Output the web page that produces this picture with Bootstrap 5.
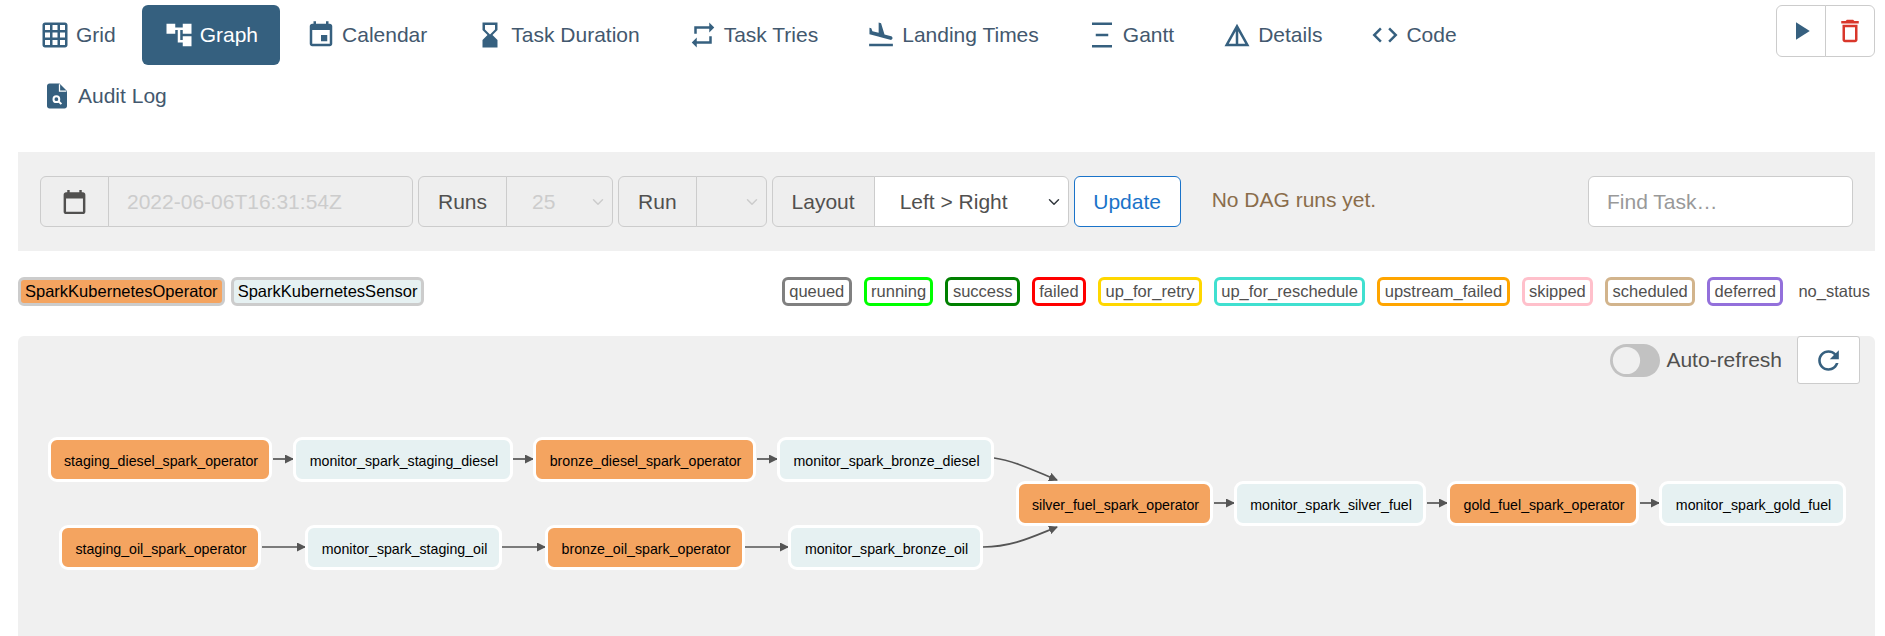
<!DOCTYPE html>
<html lang="en">
<head>
    <meta charset="UTF-8">
    <meta name="viewport" content="width=device-width, initial-scale=1.0">
    <title>Graph</title>
    <link rel="stylesheet" href="https://cdn.jsdelivr.net/npm/bootstrap@5.3.0/dist/css/bootstrap.min.css">
    <style>
        html, body { overflow: hidden; }
        body { font-family: "Liberation Sans", Arial, sans-serif; color: #51504f; padding: 0 10px 0 18px; height: 636px; }
        .top-nav { width: 1560px; column-gap: 4px; row-gap: 1px; padding-top: 5px; }
        .top-nav .nav-link { display: flex; align-items: center; gap: 6px; height: 60px; padding: 0 22px; font-size: 21px; color: #43586e; border-radius: 6px; }
        .top-nav .nav-link svg { width: 30px; height: 30px; fill: #36607f; flex: none; }
        .top-nav .nav-link.active { background-color: #35607f; color: #fff; }
        .top-nav .nav-link.active svg { fill: #fff; }
        .top-nav .audit-link { padding-left: 24px; }
        .dag-actions { margin-top: 5px; height: 52px; }
        .dag-actions .btn { width: 50px; height: 52px; padding: 0; background: #fff; border: 1px solid #ccc; display: flex; align-items: center; justify-content: center; }
        .dag-actions svg { width: 30px; height: 30px; }
        .filter-panel { background: #f0f0f0; margin-top: 26px; height: 99px; padding: 24px 22px; gap: 5px; }
        .filter-panel .input-group { width: auto; flex: none; flex-wrap: nowrap; height: 51px; }
        .filter-panel .input-group-text, .filter-panel .form-control, .filter-panel .form-select { font-size: 21px; color: #51504f; border-color: #ccc; height: 51px; flex: none; }
        .filter-panel .input-group-text { background: #eee; padding: 0 19px; }
        .filter-panel .form-select { padding-left: 25px; background-position: right 6px center; }
        .filter-panel .form-control:disabled, .filter-panel .form-select:disabled { background-color: #eee; color: #ccc; }
        .date-addon { width: 69px; justify-content: center; }
        .date-addon svg { width: 38px; height: 38px; fill: #51504f; }
        .filter-panel .date-field { width: 305px; padding-left: 18px; }
        .filter-panel .runs-select { width: 107px; }
        .filter-panel .run-select { width: 71px; }
        .filter-panel .layout-select { width: 195px; }
        .filter-panel .form-select:disabled { background-image: url("data:image/svg+xml,%3csvg xmlns='http://www.w3.org/2000/svg' viewBox='0 0 16 16'%3e%3cpath fill='none' stroke='%23ccc' stroke-linecap='round' stroke-linejoin='round' stroke-width='2' d='m2 5 6 6 6-6'/%3e%3c/svg%3e"); }
        .update-btn { width: 107px; height: 51px; font-size: 21px; color: #1a73c9; background: #fff; border-color: #1a73c9; padding: 0; flex: none; }
        .dag-note { font-size: 21px; color: #8a6d4b; margin: 0 0 3px 26px; }
        .filter-panel .find-task { width: 265px; background: #fff; padding-left: 18px; }
        .filter-panel .find-task::placeholder { color: #999; }
        .legend-row { margin-top: 26px; height: 29px; }
        .legend-tag { height: 29px; border: 3px solid #ccc; border-radius: 6px; padding: 0 4px; font-size: 16.5px; line-height: 23px; color: #51504f; background: #fff; white-space: nowrap; }
        .op-tag { color: #000; background: #f4a460; border-color: #ccc; }
        .sensor-tag { color: #000; background: #e6f1f2; border-color: #ccc; }
        .type-list { gap: 6px; }
        .status-list { gap: 12px; }
        .status-list .legend-tag { padding: 0 4.4px; }
        .s-queued { border-color: gray; }
        .s-running { border-color: lime; }
        .s-success { border-color: green; }
        .s-failed { border-color: red; }
        .s-retry { border-color: gold; }
        .s-resched { border-color: turquoise; }
        .s-upstream { border-color: orange; }
        .s-skipped { border-color: pink; }
        .s-scheduled { border-color: tan; }
        .s-deferred { border-color: mediumpurple; }
        .status-list .s-none { border-color: #fff; padding: 0 2px 0 4px; margin-left: -4px; }
        .graph-panel { background: #f0f0f0; border-radius: 6px 6px 0 0; margin-top: 30px; height: 300px; }
        .refresh-bar { position: relative; z-index: 1; height: 48px; padding-right: 15px; }
        .refresh-bar .form-check-input { width: 50px; height: 33px; margin: 0 6px 0 0; float: none; border: none; border-radius: 2em; background-color: #c2c2c2; background-position: left center; background-size: contain; background-repeat: no-repeat; background-image: url("data:image/svg+xml,%3csvg xmlns='http://www.w3.org/2000/svg' viewBox='-4 -4 8 8'%3e%3ccircle r='3.3' fill='%23f0f0f0'/%3e%3c/svg%3e"); }
        .refresh-label { font-size: 21px; margin-right: 15px; }
        .refresh-btn { width: 63px; height: 48px; padding: 0; background: #fff; border: 1px solid #ccc; display: flex; align-items: center; justify-content: center; border-radius: 3px; }
        .refresh-btn svg { width: 31px; height: 31px; fill: #36607f; }
        .dag-edges { position: absolute; left: 0; top: 0; width: 1857px; height: 300px; }
        .task-node { position: absolute; height: 45px; border: 3px solid #fff; border-radius: 9px; padding-left: 2px; font-size: 14.2px; line-height: 42px; text-align: center; color: #000; white-space: nowrap; }
        .node-op { background: #f4a460; }
        .node-sensor { background: #e6f1f2; }
    </style>
</head>
<body>
    <div class="d-flex justify-content-between align-items-start">
        <ul class="nav nav-pills top-nav">
            <li class="nav-item"><a class="nav-link" href="#"><svg viewBox="0 0 24 24"><path d="M20 2H4c-1.1 0-2 .9-2 2v16c0 1.1.9 2 2 2h16c1.1 0 2-.9 2-2V4c0-1.1-.9-2-2-2zM8 20H4v-4h4v4zm0-6H4v-4h4v4zm0-6H4V4h4v4zm6 12h-4v-4h4v4zm0-6h-4v-4h4v4zm0-6h-4V4h4v4zm6 12h-4v-4h4v4zm0-6h-4v-4h4v4zm0-6h-4V4h4v4z"/></svg>Grid</a></li>
            <li class="nav-item"><a class="nav-link active" href="#"><svg viewBox="0 0 24 24"><path d="M22 11V3h-7v3H9V3H2v8h7V8h2v10h4v3h7v-8h-7v3h-2V8h2v3z"/></svg>Graph</a></li>
            <li class="nav-item"><a class="nav-link" href="#"><svg viewBox="0 0 24 24"><path d="M17 12h-5v5h5v-5zM16 1v2H8V1H6v2H5c-1.11 0-1.99.9-1.99 2L3 19c0 1.1.89 2 2 2h14c1.1 0 2-.9 2-2V5c0-1.1-.9-2-2-2h-1V1h-2zm3 18H5V8h14v11z"/></svg>Calendar</a></li>
            <li class="nav-item"><a class="nav-link" href="#"><svg viewBox="0 0 24 24"><path d="M18 22l-.01-6L14 12l3.99-4.01L18 2H6v6l4 4-4 3.99V22h12zM8 7.5V4h8v3.5l-4 4-4-4z"/></svg>Task Duration</a></li>
            <li class="nav-item"><a class="nav-link" href="#"><svg viewBox="0 0 24 24"><path d="M7 7h10v3l4-4-4-4v3H5v6h2V7zm10 10H7v-3l-4 4 4 4v-3h12v-6h-2v4z"/></svg>Task Tries</a></li>
            <li class="nav-item"><a class="nav-link" href="#"><svg viewBox="0 0 24 24"><path d="M2.5 19h19v2h-19zm7.18-5.73l4.35 1.16 5.31 1.42c.8.21 1.62-.26 1.84-1.06.21-.8-.26-1.62-1.06-1.84l-5.31-1.42-2.76-9.02L10.12 2v8.28L5.15 8.95l-.93-2.32-1.45-.39v5.17l1.6.43 5.31 1.43z"/></svg>Landing Times</a></li>
            <li class="nav-item"><a class="nav-link" href="#"><svg viewBox="0 0 24 24"><path d="M4 22v-2h16v2H4zM4 4V2h16v2H4zm3 9v-2h10v2H7z"/></svg>Gantt</a></li>
            <li class="nav-item"><a class="nav-link" href="#"><svg viewBox="0 0 24 24"><path d="M12 3L2 21h20L12 3zm1 5.92L18.6 19H13V8.92zm-2 0V19H5.4L11 8.92z"/></svg>Details</a></li>
            <li class="nav-item"><a class="nav-link" href="#"><svg viewBox="0 0 24 24"><path d="M9.4 16.6L4.8 12l4.6-4.6L8 6l-6 6 6 6 1.4-1.4zm5.2 0l4.6-4.6-4.6-4.6L16 6l6 6-6 6-1.4-1.4z"/></svg>Code</a></li>
            <li class="nav-item"><a class="nav-link audit-link" href="#"><svg viewBox="0 0 24 24"><path d="M14 2H6c-1.1 0-2 .9-2 2v16c0 1.1.9 2 2 2h12c1.1 0 2-.9 2-2V8z"/><path d="M14 2.5V8h5.5" fill="none" stroke="#fff" stroke-width="1"/><circle cx="11.5" cy="14.5" r="2.3" fill="none" stroke="#fff" stroke-width="1.6"/><path d="M13.2 16.2l2.3 2.3" stroke="#fff" stroke-width="1.6"/></svg>Audit Log</a></li>
        </ul>
        <div class="btn-group dag-actions">
            <button class="btn" type="button"><svg viewBox="0 0 24 24" fill="#36607f"><path d="M8 5v14l11-7z"/></svg></button>
            <button class="btn" type="button"><svg viewBox="0 0 24 24" fill="#d9372b"><path d="M6 19c0 1.1.9 2 2 2h8c1.1 0 2-.9 2-2V7H6v12zM8 9h8v10H8V9zm7.5-5l-1-1h-5l-1 1H5v2h14V4z"/></svg></button>
        </div>
    </div>

    <form class="filter-panel d-flex align-items-center">
        <div class="input-group">
            <span class="input-group-text date-addon"><svg viewBox="0 0 24 24"><path d="M19 4h-1V2h-2v2H8V2H6v2H5c-1.1 0-2 .9-2 2v14c0 1.1.9 2 2 2h14c1.1 0 2-.9 2-2V6c0-1.1-.9-2-2-2zm0 16H5V9h14v11z"/></svg></span>
            <input class="form-control date-field" type="text" value="2022-06-06T16:31:54Z" disabled>
        </div>
        <div class="input-group">
            <span class="input-group-text">Runs</span>
            <select class="form-select runs-select" disabled><option>25</option></select>
        </div>
        <div class="input-group">
            <span class="input-group-text">Run</span>
            <select class="form-select run-select" disabled></select>
        </div>
        <div class="input-group">
            <span class="input-group-text">Layout</span>
            <select class="form-select layout-select"><option>Left &gt; Right</option></select>
        </div>
        <button class="btn update-btn" type="button">Update</button>
        <span class="dag-note">No DAG runs yet.</span>
        <div class="input-group ms-auto">
            <input class="form-control find-task rounded" type="text" placeholder="Find Task…">
        </div>
    </form>

    <div class="legend-row d-flex justify-content-between">
        <div class="d-flex type-list">
            <span class="legend-tag op-tag">SparkKubernetesOperator</span>
            <span class="legend-tag sensor-tag">SparkKubernetesSensor</span>
        </div>
        <div class="d-flex status-list">
            <span class="legend-tag s-queued">queued</span>
            <span class="legend-tag s-running">running</span>
            <span class="legend-tag s-success">success</span>
            <span class="legend-tag s-failed">failed</span>
            <span class="legend-tag s-retry">up_for_retry</span>
            <span class="legend-tag s-resched">up_for_reschedule</span>
            <span class="legend-tag s-upstream">upstream_failed</span>
            <span class="legend-tag s-skipped">skipped</span>
            <span class="legend-tag s-scheduled">scheduled</span>
            <span class="legend-tag s-deferred">deferred</span>
            <span class="legend-tag s-none">no_status</span>
        </div>
    </div>

    <div class="graph-panel position-relative">
        <svg class="dag-edges" viewBox="18 336 1857 300">
            <defs><marker id="arrowhead" markerWidth="9" markerHeight="9" refX="8" refY="4.5" orient="auto" markerUnits="userSpaceOnUse"><path d="M0 0L9 4.5L0 9z" fill="#555"/></marker></defs>
            <g fill="none" stroke="#555" stroke-width="1.7">
                <path marker-end="url(#arrowhead)" d="M273 459H293"/>
                <path marker-end="url(#arrowhead)" d="M513 459H533"/>
                <path marker-end="url(#arrowhead)" d="M757 459H777"/>
                <path marker-end="url(#arrowhead)" d="M262 547H305"/>
                <path marker-end="url(#arrowhead)" d="M502 547H545"/>
                <path marker-end="url(#arrowhead)" d="M745 547H788"/>
                <path marker-end="url(#arrowhead)" d="M994 458C1015 461 1035 471 1057 480"/>
                <path marker-end="url(#arrowhead)" d="M983 547C1012 547 1032 537 1057 527"/>
                <path marker-end="url(#arrowhead)" d="M1214 503H1234"/>
                <path marker-end="url(#arrowhead)" d="M1427 503H1447"/>
                <path marker-end="url(#arrowhead)" d="M1640 503H1659"/>
            </g>
        </svg>
        <div class="task-node node-op" style="left:30px;top:101px;width:224px">staging_diesel_spark_operator</div>
        <div class="task-node node-sensor" style="left:275px;top:101px;width:220px">monitor_spark_staging_diesel</div>
        <div class="task-node node-op" style="left:515px;top:101px;width:223px">bronze_diesel_spark_operator</div>
        <div class="task-node node-sensor" style="left:759px;top:101px;width:217px">monitor_spark_bronze_diesel</div>
        <div class="task-node node-op" style="left:41px;top:189px;width:202px">staging_oil_spark_operator</div>
        <div class="task-node node-sensor" style="left:287px;top:189px;width:197px">monitor_spark_staging_oil</div>
        <div class="task-node node-op" style="left:527px;top:189px;width:200px">bronze_oil_spark_operator</div>
        <div class="task-node node-sensor" style="left:770px;top:189px;width:195px">monitor_spark_bronze_oil</div>
        <div class="task-node node-op" style="left:998px;top:145px;width:197px">silver_fuel_spark_operator</div>
        <div class="task-node node-sensor" style="left:1216px;top:145px;width:192px">monitor_spark_silver_fuel</div>
        <div class="task-node node-op" style="left:1429px;top:145px;width:192px">gold_fuel_spark_operator</div>
        <div class="task-node node-sensor" style="left:1641px;top:145px;width:187px">monitor_spark_gold_fuel</div>
        <div class="refresh-bar d-flex justify-content-end align-items-center">
            <input class="form-check-input" type="checkbox" role="switch" id="auto_refresh">
            <label class="refresh-label" for="auto_refresh">Auto-refresh</label>
            <button class="refresh-btn" type="button"><svg viewBox="0 0 24 24"><path d="M17.65 6.35C16.2 4.9 14.21 4 12 4c-4.42 0-7.99 3.58-7.99 8s3.57 8 7.99 8c3.73 0 6.84-2.55 7.73-6h-2.08c-.82 2.33-3.04 4-5.65 4-3.31 0-6-2.69-6-6s2.69-6 6-6c1.66 0 3.14.69 4.22 1.78L13 11h7V4l-2.35 2.35z"/></svg></button>
        </div>
    </div>
    <script src="https://cdn.jsdelivr.net/npm/bootstrap@5.3.0/dist/js/bootstrap.bundle.min.js"></script>
</body>
</html>
